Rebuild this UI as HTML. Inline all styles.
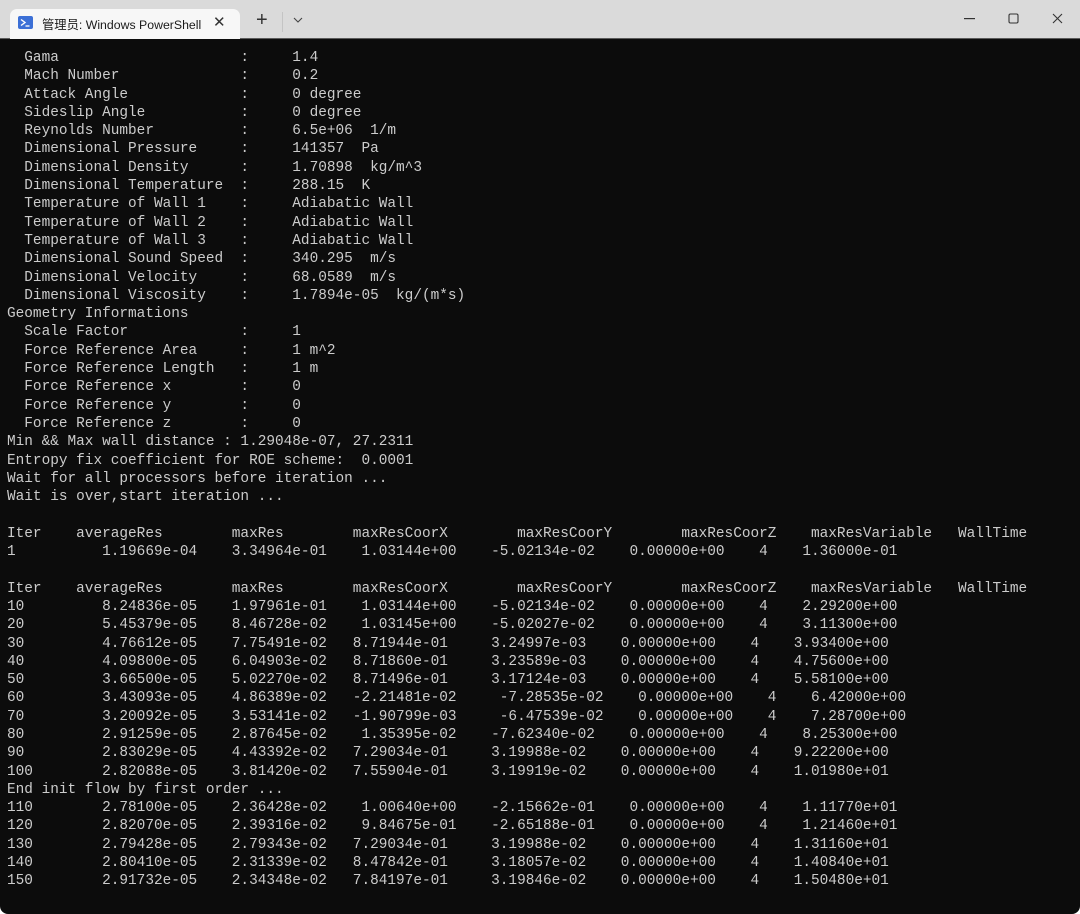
<!DOCTYPE html>
<html><head><meta charset="utf-8"><style>
html,body{margin:0;padding:0;width:1080px;height:914px;overflow:hidden;background:#fff}
.win{position:absolute;left:0;top:0;width:1080px;height:914px;background:#0c0c0c;border-radius:0 0 8px 8px;overflow:hidden}
.title{position:absolute;left:0;top:0;width:1080px;height:38px;background:#dadada;border-bottom:1px solid #5a5a5a}
.tab{position:absolute;left:10px;top:9px;width:230px;height:30px;background:#f7f7f7;border-radius:7px 7px 0 0}
.tab .t{position:absolute;left:32px;top:6px;font:12.3px "Liberation Sans","Noto Sans CJK SC",sans-serif;color:#1a1a1a;white-space:nowrap}
.tab .x{position:absolute;left:203px;top:4px;font:15px "Liberation Sans",sans-serif;color:#333}
.ico{position:absolute;left:8px;top:7px;width:15px;height:13px;background:#3b6fd6;border-radius:2px}
.plus{position:absolute;left:256px;top:9px;font:20px "Liberation Sans",sans-serif;color:#333}
.sep{position:absolute;left:282px;top:12px;width:1px;height:20px;background:#c4c4c4}
.chev{position:absolute;left:292px;top:14px}
pre{position:absolute;left:7px;top:49px;margin:0;font-family:"Liberation Mono",monospace;font-size:14.42px;line-height:18.29px;color:#cccccc}
</style></head><body>
<div class="win">
<div class="title">
 <div class="tab"><div class="ico"><svg width="15" height="13" viewBox="0 0 15 13"><path d="M3 3.5 L7 6.5 L3 9.5" stroke="#fff" stroke-width="1.4" fill="none"/><path d="M7.5 10 H11.5" stroke="#fff" stroke-width="1.3"/></svg></div><span class="t">管理员: Windows PowerShell</span><span class="x">✕</span></div>
 <div class="plus">+</div>
 <div class="sep"></div>
 <svg class="chev" width="12" height="12" viewBox="0 0 12 12"><path d="M2 4 L6 8 L10 4" stroke="#444" stroke-width="1.1" fill="none"/></svg>
 <svg style="position:absolute;left:964px;top:18px" width="12" height="2"><rect width="11" height="1.2" fill="#333"/></svg>
 <svg style="position:absolute;left:1008px;top:13px" width="12" height="12"><rect x="1" y="1" width="9" height="9" rx="1.5" stroke="#333" stroke-width="1.1" fill="none"/></svg>
 <svg style="position:absolute;left:1052px;top:13px" width="12" height="12"><path d="M1 1 L10 10 M10 1 L1 10" stroke="#333" stroke-width="1.1"/></svg>
</div>
<pre>  Gama                     :     1.4
  Mach Number              :     0.2
  Attack Angle             :     0 degree
  Sideslip Angle           :     0 degree
  Reynolds Number          :     6.5e+06  1/m
  Dimensional Pressure     :     141357  Pa
  Dimensional Density      :     1.70898  kg/m^3
  Dimensional Temperature  :     288.15  K
  Temperature of Wall 1    :     Adiabatic Wall
  Temperature of Wall 2    :     Adiabatic Wall
  Temperature of Wall 3    :     Adiabatic Wall
  Dimensional Sound Speed  :     340.295  m/s
  Dimensional Velocity     :     68.0589  m/s
  Dimensional Viscosity    :     1.7894e-05  kg/(m*s)
Geometry Informations
  Scale Factor             :     1
  Force Reference Area     :     1 m^2
  Force Reference Length   :     1 m
  Force Reference x        :     0
  Force Reference y        :     0
  Force Reference z        :     0
Min &amp;&amp; Max wall distance : 1.29048e-07, 27.2311
Entropy fix coefficient for ROE scheme:  0.0001
Wait for all processors before iteration ...
Wait is over,start iteration ...

Iter    averageRes        maxRes        maxResCoorX        maxResCoorY        maxResCoorZ    maxResVariable   WallTime
1          1.19669e-04    3.34964e-01    1.03144e+00    -5.02134e-02    0.00000e+00    4    1.36000e-01

Iter    averageRes        maxRes        maxResCoorX        maxResCoorY        maxResCoorZ    maxResVariable   WallTime
10         8.24836e-05    1.97961e-01    1.03144e+00    -5.02134e-02    0.00000e+00    4    2.29200e+00
20         5.45379e-05    8.46728e-02    1.03145e+00    -5.02027e-02    0.00000e+00    4    3.11300e+00
30         4.76612e-05    7.75491e-02   8.71944e-01     3.24997e-03    0.00000e+00    4    3.93400e+00
40         4.09800e-05    6.04903e-02   8.71860e-01     3.23589e-03    0.00000e+00    4    4.75600e+00
50         3.66500e-05    5.02270e-02   8.71496e-01     3.17124e-03    0.00000e+00    4    5.58100e+00
60         3.43093e-05    4.86389e-02   -2.21481e-02     -7.28535e-02    0.00000e+00    4    6.42000e+00
70         3.20092e-05    3.53141e-02   -1.90799e-03     -6.47539e-02    0.00000e+00    4    7.28700e+00
80         2.91259e-05    2.87645e-02    1.35395e-02    -7.62340e-02    0.00000e+00    4    8.25300e+00
90         2.83029e-05    4.43392e-02   7.29034e-01     3.19988e-02    0.00000e+00    4    9.22200e+00
100        2.82088e-05    3.81420e-02   7.55904e-01     3.19919e-02    0.00000e+00    4    1.01980e+01
End init flow by first order ...
110        2.78100e-05    2.36428e-02    1.00640e+00    -2.15662e-01    0.00000e+00    4    1.11770e+01
120        2.82070e-05    2.39316e-02    9.84675e-01    -2.65188e-01    0.00000e+00    4    1.21460e+01
130        2.79428e-05    2.79343e-02   7.29034e-01     3.19988e-02    0.00000e+00    4    1.31160e+01
140        2.80410e-05    2.31339e-02   8.47842e-01     3.18057e-02    0.00000e+00    4    1.40840e+01
150        2.91732e-05    2.34348e-02   7.84197e-01     3.19846e-02    0.00000e+00    4    1.50480e+01</pre>
</div>
</body></html>
